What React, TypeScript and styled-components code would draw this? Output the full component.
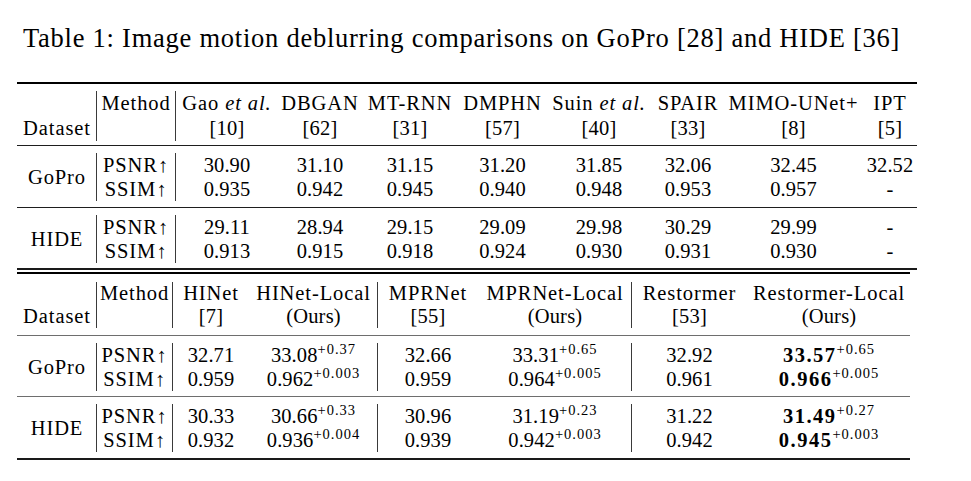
import React from "react";
import styled, { createGlobalStyle } from "styled-components";

const GlobalStyle = createGlobalStyle`
  html, body { margin: 0; padding: 0; background: #ffffff; }
  body {
    width: 971px;
    height: 481px;
    overflow: hidden;
    font-family: "Liberation Serif", "Times New Roman", serif;
    color: #000;
  }
`;

const Page = styled.div`
  padding: 23px 0 0 17px;
`;

const Caption = styled.div`
  padding-left: 6px;
  font-size: 26.5px;
  line-height: 30px;
  letter-spacing: 0.75px;
  white-space: nowrap;
  margin-bottom: 29px;
`;

const Table = styled.div<{ $width: number; $gap?: number }>`
  width: ${(p) => p.$width}px;
  margin-top: ${(p) => p.$gap ?? 0}px;
  border-top: 2px solid #000;
  border-bottom: 2px solid #1a1a1a;
  font-size: 20.5px;
`;

const Block = styled.div<{
  $cols: string;
  $lh: number;
  $pt: number;
  $pb: number;
  $rule?: string;
}>`
  display: grid;
  grid-template-columns: ${(p) => p.$cols};
  line-height: ${(p) => p.$lh}px;
  padding: ${(p) => p.$pt}px 0 ${(p) => p.$pb}px;
  border-top: ${(p) => (p.$rule ? `1px solid ${p.$rule}` : "none")};
`;

const Cell = styled.div<{ $vline?: boolean; $valign?: "start" | "center" | "end" }>`
  display: flex;
  flex-direction: column;
  align-items: center;
  justify-content: ${(p) =>
    p.$valign === "start" ? "flex-start" : p.$valign === "end" ? "flex-end" : "center"};
  border-left: ${(p) => (p.$vline ? "1px solid #3a3a3a" : "1px solid transparent")};
  white-space: nowrap;
`;

const Line = styled.div`
  white-space: nowrap;
`;

const Label = styled.span`
  letter-spacing: 0.9px;
`;

const Ref = styled.span`
  letter-spacing: 0.2px;
`;

const Em = styled.i`
  font-style: italic;
`;

const Num = styled.span<{ $bold?: boolean }>`
  font-weight: ${(p) => (p.$bold ? 700 : 400)};
  letter-spacing: ${(p) => (p.$bold ? "1.5px" : "0.1px")};
`;

const Sup = styled.span`
  font-size: 14.5px;
  line-height: 0;
  vertical-align: 8px;
  letter-spacing: 1px;
`;

type Val = { v: string; sup?: string; bold?: boolean };

const Value = ({ v, sup, bold }: Val) => (
  <Line>
    <Num $bold={bold}>{v}</Num>
    {sup && <Sup>{sup}</Sup>}
  </Line>
);

type Method = { name: React.ReactNode; ref: string; vline?: boolean };

type Section = {
  dataset: string;
  rows: Val[][]; // [PSNR row, SSIM row]
  pt: number;
  pb: number;
};

type TableSpec = {
  width: number;
  gap?: number;
  cols: string;
  methodVline: boolean;
  methods: Method[];
  header: { lh: number; pt: number; pb: number };
  sections: Section[];
  rule: string;
};

const upper: TableSpec = {
  width: 900,
  cols: "79px 79px 103px 83px 97px 88px 105px 73px 138px 55px",
  methodVline: true,
  methods: [
    { name: <>Gao <Em>et al.</Em></>, ref: "[10]", vline: true },
    { name: "DBGAN", ref: "[62]" },
    { name: "MT-RNN", ref: "[31]" },
    { name: "DMPHN", ref: "[57]" },
    { name: <>Suin <Em>et al.</Em></>, ref: "[40]" },
    { name: "SPAIR", ref: "[33]" },
    { name: "MIMO-UNet+", ref: "[8]" },
    { name: "IPT", ref: "[5]" },
  ],
  header: { lh: 25, pt: 7, pb: 4 },
  rule: "#1e1e1e",
  sections: [
    {
      dataset: "GoPro",
      pt: 7,
      pb: 6,
      rows: [
        ["30.90", "31.10", "31.15", "31.20", "31.85", "32.06", "32.45", "32.52"].map((v) => ({ v })),
        ["0.935", "0.942", "0.945", "0.940", "0.948", "0.953", "0.957", "-"].map((v) => ({ v })),
      ],
    },
    {
      dataset: "HIDE",
      pt: 7,
      pb: 5,
      rows: [
        ["29.11", "28.94", "29.15", "29.09", "29.98", "30.29", "29.99", "-"].map((v) => ({ v })),
        ["0.913", "0.915", "0.918", "0.924", "0.930", "0.931", "0.930", "-"].map((v) => ({ v })),
      ],
    },
  ],
};

const lower: TableSpec = {
  width: 893,
  gap: 2,
  cols: "79px 76px 77px 128px 101px 153px 116px 163px",
  methodVline: true,
  methods: [
    { name: "HINet", ref: "[7]", vline: true },
    { name: "HINet-Local", ref: "(Ours)" },
    { name: "MPRNet", ref: "[55]", vline: true },
    { name: "MPRNet-Local", ref: "(Ours)" },
    { name: "Restormer", ref: "[53]", vline: true },
    { name: "Restormer-Local", ref: "(Ours)" },
  ],
  header: { lh: 23, pt: 8, pb: 7 },
  rule: "#6e6e6e",
  sections: [
    {
      dataset: "GoPro",
      pt: 7,
      pb: 5,
      rows: [
        [
          { v: "32.71" },
          { v: "33.08", sup: "+0.37" },
          { v: "32.66" },
          { v: "33.31", sup: "+0.65" },
          { v: "32.92" },
          { v: "33.57", sup: "+0.65", bold: true },
        ],
        [
          { v: "0.959" },
          { v: "0.962", sup: "+0.003" },
          { v: "0.959" },
          { v: "0.964", sup: "+0.005" },
          { v: "0.961" },
          { v: "0.966", sup: "+0.005", bold: true },
        ],
      ],
    },
    {
      dataset: "HIDE",
      pt: 7,
      pb: 6,
      rows: [
        [
          { v: "30.33" },
          { v: "30.66", sup: "+0.33" },
          { v: "30.96" },
          { v: "31.19", sup: "+0.23" },
          { v: "31.22" },
          { v: "31.49", sup: "+0.27", bold: true },
        ],
        [
          { v: "0.932" },
          { v: "0.936", sup: "+0.004" },
          { v: "0.939" },
          { v: "0.942", sup: "+0.003" },
          { v: "0.942" },
          { v: "0.945", sup: "+0.003", bold: true },
        ],
      ],
    },
  ],
};

const ResultTable = ({ spec }: { spec: TableSpec }) => (
  <Table $width={spec.width} $gap={spec.gap}>
    <Block $cols={spec.cols} $lh={spec.header.lh} $pt={spec.header.pt} $pb={spec.header.pb}>
      <Cell $valign="end">
        <Line>
          <Label>Dataset</Label>
        </Line>
      </Cell>
      <Cell $vline={spec.methodVline} $valign="start">
        <Line>
          <Label>Method</Label>
        </Line>
      </Cell>
      {spec.methods.map((m, i) => (
        <Cell key={i} $vline={m.vline}>
          <Line>
            <Label>{m.name}</Label>
          </Line>
          <Line>
            <Ref>{m.ref}</Ref>
          </Line>
        </Cell>
      ))}
    </Block>
    {spec.sections.map((s) => (
      <Block key={s.dataset} $cols={spec.cols} $lh={24} $pt={s.pt} $pb={s.pb} $rule={spec.rule}>
        <Cell>
          <Line>
            <Label>{s.dataset}</Label>
          </Line>
        </Cell>
        <Cell $vline={spec.methodVline}>
          <Line>
            <Label>PSNR↑</Label>
          </Line>
          <Line>
            <Label>SSIM↑</Label>
          </Line>
        </Cell>
        {spec.methods.map((m, i) => (
          <Cell key={i} $vline={m.vline}>
            <Value {...s.rows[0][i]} />
            <Value {...s.rows[1][i]} />
          </Cell>
        ))}
      </Block>
    ))}
  </Table>
);

export default function App() {
  return (
    <>
      <GlobalStyle />
      <Page>
        <Caption>Table 1: Image motion deblurring comparisons on GoPro [28] and HIDE [36]</Caption>
        <ResultTable spec={upper} />
        <ResultTable spec={lower} />
      </Page>
    </>
  );
}
